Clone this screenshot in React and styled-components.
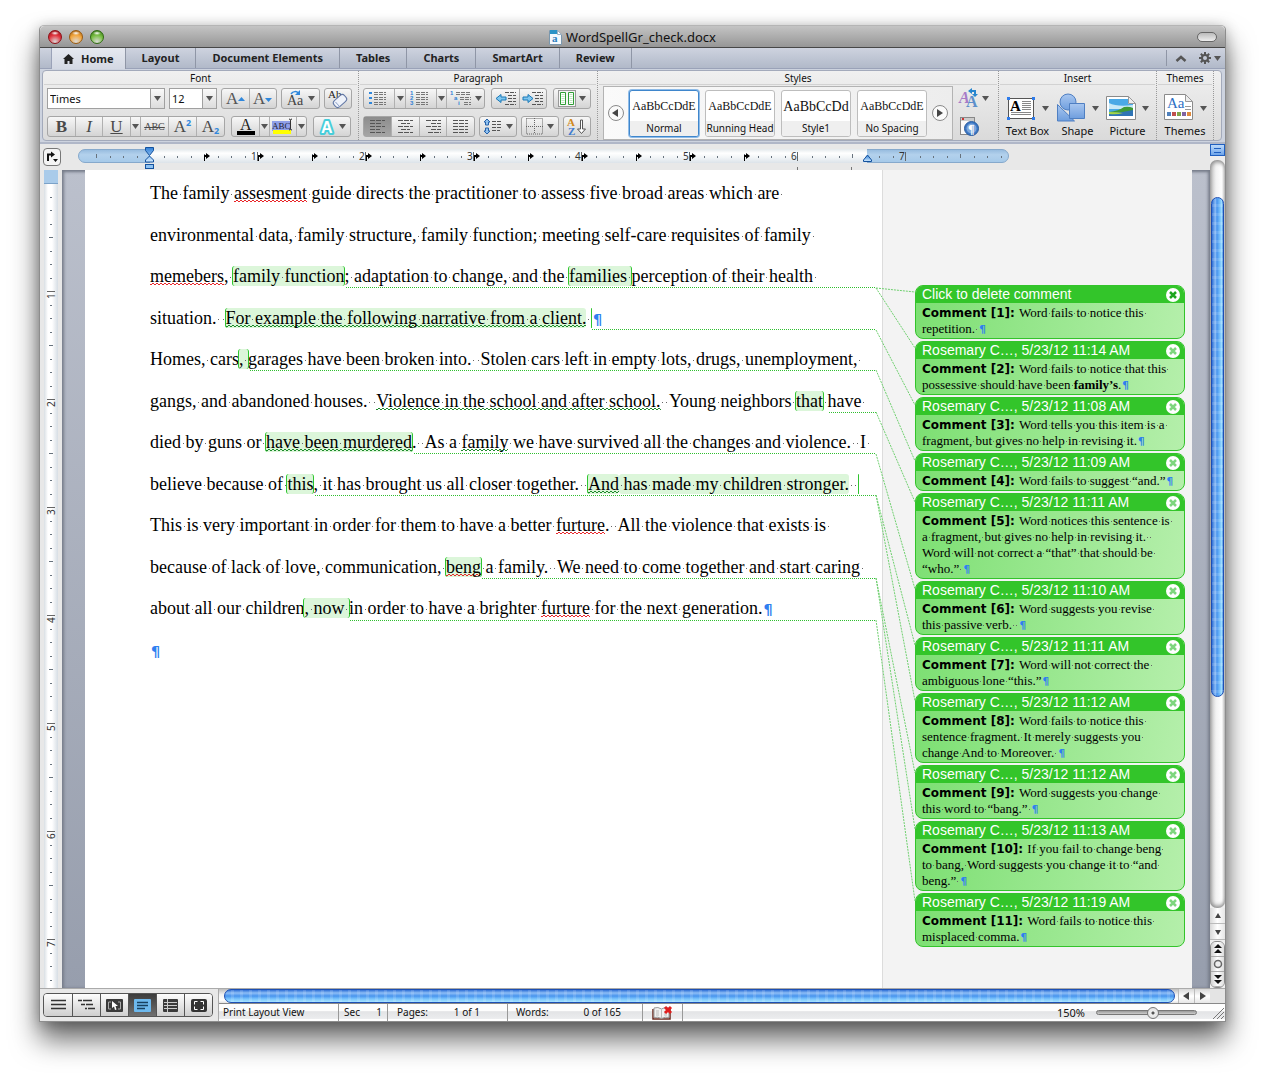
import { useState } from 'react'
import styled, { createGlobalStyle, css } from 'styled-components'

const UI = '"Noto Sans", "Open Sans", sans-serif'
const SERIF = '"Liberation Serif", "Times New Roman", serif'
const SANS = '"Liberation Sans", Arial, sans-serif'

const TABS = ['Home', 'Layout', 'Document Elements', 'Tables', 'Charts', 'SmartArt', 'Review']

const STYLE_CARDS = [
  { name: 'Normal', sample: 'AaBbCcDdE' },
  { name: 'Running Head', sample: 'AaBbCcDdE' },
  { name: 'Style1', sample: 'AaBbCcDd', large: true },
  { name: 'No Spacing', sample: 'AaBbCcDdE' },
]

// A run is plain text or { t, note, edge, under, strong, pilcrow, bracket }
const LINES = [
  ['The family ', { t: 'assesment', under: 'spell' }, ' guide directs the practitioner to assess five broad areas which are '],
  ['environmental data, family structure, family function; meeting self-care requisites of family '],
  [
    { t: 'memebers', under: 'spell' }, ', ', { t: 'family function', note: true, edge: 'both' },
    '; adaptation to change, and the ', { t: 'families ', note: true, edge: 'both' }, 'perception of their health ',
  ],
  ['situation.  ', { t: 'For example the following narrative from a client.', note: true, edge: 'left', under: 'grammar' }, ' ', { bracket: true }, { pilcrow: true }],
  ['Homes, cars', { t: ', ', note: true, edge: 'both' }, 'garages have been broken into.  Stolen cars left in empty lots, drugs, unemployment, '],
  ['gangs, and abandoned houses.  ', { t: 'Violence in the school and after school.', under: 'grammar' }, '  Young neighbors ', { t: 'that', note: true, edge: 'both' }, ' have '],
  ['died by guns or ', { t: 'have been murdered', note: true, edge: 'both', under: 'grammar' }, '.  As a ', { t: 'family', under: 'grammar' }, ' we have survived all the changes and violence.  I '],
  [
    'believe because of ', { t: 'this', note: true, edge: 'both' }, ', it has brought us all closer together.  ',
    { t: 'And', note: true, edge: 'left', under: 'grammar' }, { t: ' has made my children stronger.', note: true }, '  ', { bracket: true },
  ],
  ['This is very important in order for them to have a better ', { t: 'furture', under: 'spell' }, '.  All the violence that exists is '],
  ['because of lack of love, communication, ', { t: 'beng', note: true, edge: 'both', under: 'spell' }, ' a family.  We need to come together and start caring '],
  ['about all our children', { t: ', now ', note: true, edge: 'both' }, 'in order to have a brighter ', { t: 'furture', under: 'spell' }, ' for the next generation.', { pilcrow: true }],
  [{ pilcrow: true }],
]

const P = { pilcrow: true }

const COMMENTS = [
  { head: 'Click to delete comment', hot: true, lines: [['Word fails to notice this '], ['repetition. ', P]] },
  { head: 'Rosemary C…, 5/23/12 11:14 AM', lines: [['Word fails to notice that this '], ['possessive should have been ', { t: 'family’s', strong: true }, '.', P]] },
  { head: 'Rosemary C…, 5/23/12 11:08 AM', lines: [['Word tells you this item is a '], ['fragment, but gives no help in revising it.', P]] },
  { head: 'Rosemary C…, 5/23/12 11:09 AM', lines: [['Word fails to suggest “and.”', P]] },
  { head: 'Rosemary C…, 5/23/12 11:11 AM', lines: [['Word notices this sentence is '], ['a fragment, but gives no help in revising it.  '], ['Word will not correct a “that” that should be '], ['“who.” ', P]] },
  { head: 'Rosemary C…, 5/23/12 11:10 AM', lines: [['Word suggests you revise '], ['this passive verb.  ', P]] },
  { head: 'Rosemary C…, 5/23/12 11:11 AM', lines: [['Word will not correct the '], ['ambiguous lone “this.”', P]] },
  { head: 'Rosemary C…, 5/23/12 11:12 AM', lines: [['Word fails to notice this '], ['sentence fragment. It merely suggests you '], ['change And to Moreover. ', P]] },
  { head: 'Rosemary C…, 5/23/12 11:12 AM', lines: [['Word suggests you change '], ['this word to “bang.” ', P]] },
  { head: 'Rosemary C…, 5/23/12 11:13 AM', lines: [['If you fail to change beng '], ['to bang, Word suggests you change it to “and '], ['beng.” ', P]] },
  { head: 'Rosemary C…, 5/23/12 11:19 AM', lines: [['Word fails to notice this '], ['misplaced comma.', P]] },
]

// Horizontal leaders: where the note ends, and the line it sits under
const LEADERS = [[261, 117], [507, 159], [165, 200], [744, 242], [329, 283], [230, 325], [397, 408], [265, 450]]
// Diagonals: leader height to the comment's top
const DIAGONALS = [[118, 122], [118, 178], [160, 235], [200, 291], [242, 332], [284, 419], [325, 475], [325, 531], [408, 603], [408, 659], [450, 731]]

const range = n => Array.from({ length: n }, (_, i) => i)

export default function App() {
  const [tab, setTab] = useState('Home')
  const [style, setStyle] = useState('Normal')
  const [view, setView] = useState(3)
  const [align, setAlign] = useState(0)

  return (
    <>
      <Global />
      <S.Window>
        <S.TitleBar>
          <S.Lights>
            <S.Light $c="#e0323c" $d="#8e1017" aria-label="Close" />
            <S.Light $c="#f3a63c" $d="#9a5a10" aria-label="Minimize" />
            <S.Light $c="#76bd40" $d="#2f6b12" aria-label="Zoom" />
          </S.Lights>
          <S.Title>
            <DocIcon />
            WordSpellGr_check.docx
          </S.Title>
          <S.Pill aria-label="Toggle toolbar" />
        </S.TitleBar>

        <S.TabBar>
          {TABS.map(name => (
            <S.Tab key={name} $active={tab === name} onClick={() => setTab(name)}>
              {name === 'Home' && <HomeIcon />}
              {name}
            </S.Tab>
          ))}
          <S.TabTools>
            <S.Bare aria-label="Collapse ribbon">
              <svg width="12" height="7"><path d="M1.500 6L6 2l4.500 4" fill="none" stroke="#555" strokeWidth="2.500" /></svg>
            </S.Bare>
            <S.Bare aria-label="Ribbon settings"><GearIcon /><Caret /></S.Bare>
          </S.TabTools>
        </S.TabBar>

        <S.RibbonWrap>
          <S.Ribbon>
            <S.Group>
              <S.GroupName>Font</S.GroupName>
              <S.GroupBody>
                <S.Row $gap={4}>
                  <S.Combo $w={118}>
                    <input aria-label="Font name" defaultValue="Times" />
                    <button aria-label="Choose font"><Caret /></button>
                  </S.Combo>
                  <S.Combo $w={48}>
                    <input aria-label="Font size" defaultValue="12" />
                    <button aria-label="Choose size"><Caret /></button>
                  </S.Combo>
                  <S.Segment>
                    <S.Tool $w={27} aria-label="Grow font"><LetterArrow up /></S.Tool>
                    <S.Tool $w={27} aria-label="Shrink font"><LetterArrow /></S.Tool>
                  </S.Segment>
                  <S.Segment>
                    <S.Tool $w={37} aria-label="Change case"><CaseIcon /><Caret /></S.Tool>
                  </S.Segment>
                  <S.Segment>
                    <S.Tool $w={26} aria-label="Clear formatting"><EraserIcon /></S.Tool>
                  </S.Segment>
                </S.Row>
                <S.Row $gap={6}>
                  <S.Segment>
                    <S.Tool $w={27} $glyph><b>B</b></S.Tool>
                    <S.Tool $w={27} $glyph><i>I</i></S.Tool>
                    <S.Tool $w={28} $glyph><u>U</u></S.Tool>
                    <S.Tool $w={10} aria-label="Underline style"><Caret /></S.Tool>
                    <S.Tool $w={28} $glyph $small><s>ABC</s></S.Tool>
                    <S.Tool $w={28} $glyph>A<sup>2</sup></S.Tool>
                    <S.Tool $w={28} $glyph>A<sub>2</sub></S.Tool>
                  </S.Segment>
                  <S.Segment>
                    <S.Tool $w={27} aria-label="Font color"><ColorIcon /></S.Tool>
                    <S.Tool $w={10} aria-label="Pick font color"><Caret /></S.Tool>
                    <S.Tool $w={27} aria-label="Highlight"><HighlightIcon /></S.Tool>
                    <S.Tool $w={10} aria-label="Pick highlight"><Caret /></S.Tool>
                  </S.Segment>
                  <S.Segment>
                    <S.Tool $w={36} aria-label="Text effects"><GlowIcon /><Caret /></S.Tool>
                  </S.Segment>
                </S.Row>
              </S.GroupBody>
            </S.Group>

            <S.Group>
              <S.GroupName>Paragraph</S.GroupName>
              <S.GroupBody>
                <S.Row $gap={6}>
                  <S.Segment>
                    <S.Tool $w={30} aria-label="Bullets"><ListIcon kind="bullet" /></S.Tool>
                    <S.Tool $w={11} aria-label="Bullet style"><Caret /></S.Tool>
                    <S.Tool $w={31} aria-label="Numbering"><ListIcon kind="number" /></S.Tool>
                    <S.Tool $w={10} aria-label="Number style"><Caret /></S.Tool>
                    <S.Tool $w={38} aria-label="Multilevel list"><ListIcon kind="multi" /><Caret /></S.Tool>
                  </S.Segment>
                  <S.Segment>
                    <S.Tool $w={27} aria-label="Decrease indent"><IndentIcon left /></S.Tool>
                    <S.Tool $w={27} aria-label="Increase indent"><IndentIcon /></S.Tool>
                  </S.Segment>
                  <S.Segment>
                    <S.Tool $w={36} aria-label="Columns"><ColumnsIcon /><Caret /></S.Tool>
                  </S.Segment>
                </S.Row>
                <S.Row $gap={4}>
                  <S.Segment>
                    {['left', 'center', 'right', 'justify'].map((kind, i) => (
                      <S.Tool key={kind} $w={i % 2 ? 28 : 27} $pressed={align === i} onClick={() => setAlign(i)} aria-label={`Align ${kind}`}>
                        <AlignIcon kind={kind} />
                      </S.Tool>
                    ))}
                  </S.Segment>
                  <S.Segment>
                    <S.Tool $w={36} aria-label="Line spacing"><SpacingIcon /><Caret /></S.Tool>
                  </S.Segment>
                  <S.Segment>
                    <S.Tool $w={36} aria-label="Borders"><BordersIcon /><Caret /></S.Tool>
                  </S.Segment>
                  <S.Segment>
                    <S.Tool $w={26} aria-label="Sort"><SortIcon /></S.Tool>
                  </S.Segment>
                </S.Row>
              </S.GroupBody>
            </S.Group>

            <S.Group $grow>
              <S.GroupName>Styles</S.GroupName>
              <S.StylesBody>
                <S.Gallery>
                  <S.Round aria-label="Previous styles"><Triangle dir="left" /></S.Round>
                  <S.Cards>
                    {STYLE_CARDS.map(card => (
                      <S.Card key={card.name} $active={style === card.name} onClick={() => setStyle(card.name)}>
                        <S.Sample $large={card.large}>{card.sample}</S.Sample>
                        <S.CardName>{card.name}</S.CardName>
                      </S.Card>
                    ))}
                  </S.Cards>
                  <S.Round aria-label="More styles"><Triangle dir="right" /></S.Round>
                </S.Gallery>
                <S.StyleTools>
                  <S.Bare aria-label="Change styles"><ChangeStylesIcon /><Caret /></S.Bare>
                  <S.Bare aria-label="Styles toolbox"><ToolboxIcon /></S.Bare>
                </S.StyleTools>
              </S.StylesBody>
            </S.Group>

            <S.Group>
              <S.GroupName>Insert</S.GroupName>
              <S.BigRow>
                <S.Big $w={53}><span><TextBoxIcon /><Caret /></span>Text Box</S.Big>
                <S.Big $w={47}><span><ShapeIcon /><Caret /></span>Shape</S.Big>
                <S.Big $w={53}><span><PictureIcon /><Caret /></span>Picture</S.Big>
              </S.BigRow>
            </S.Group>

            <S.Group>
              <S.GroupName>Themes</S.GroupName>
              <S.BigRow>
                <S.Big $w={52}><span><ThemesIcon /><Caret /></span>Themes</S.Big>
              </S.BigRow>
            </S.Group>
            <S.RibbonEnd />
          </S.Ribbon>
        </S.RibbonWrap>

        <S.Work>
          <S.Main>
            <S.RulerRow>
              <S.TabStop aria-label="Tab stop">
                <svg width="14" height="14"><path d="M3 11V4.500h4" fill="none" stroke="#111" strokeWidth="2" /><path d="M6 1.500l4 3-4 3zM8 9h5l-2.500 3z" fill="#111" /></svg>
              </S.TabStop>
              <Ruler />
            </S.RulerRow>
            <S.Canvas>
              <S.SideRuler><VerticalRuler /></S.SideRuler>
              <S.Desk>
                <S.Page>
                  <S.Text>
                    {LINES.map((runs, i) => <S.Line key={i}><Runs runs={runs} /></S.Line>)}
                    <S.Leaders>
                      {LEADERS.map(([x, y]) => <line key={x} x1={x} x2="100%" y1={y + 0.5} y2={y + 0.5} stroke="#2fbf2f" strokeDasharray="1 1" />)}
                    </S.Leaders>
                  </S.Text>
                  <S.Margin>
                    <S.Diagonals width="39" height="740">
                      {DIAGONALS.map(([a, b]) => <line key={b} x1="0" y1={a} x2="39" y2={b} stroke="#6fd06f" strokeDasharray="2 1" />)}
                    </S.Diagonals>
                    {COMMENTS.map((comment, i) => <Comment key={i} number={i + 1} {...comment} />)}
                  </S.Margin>
                </S.Page>
              </S.Desk>
            </S.Canvas>
          </S.Main>
          <S.VScroll>
            <S.Split><i /><i /></S.Split>
            <S.VTrack><S.VThumb /></S.VTrack>
            <S.VArrow aria-label="Scroll up"><Triangle dir="up" /></S.VArrow>
            <S.VArrow aria-label="Scroll down"><Triangle dir="down" /></S.VArrow>
            <S.Browse>
              <button aria-label="Previous page"><svg width="10" height="10"><path d="M5 0l4 4H1zM5 5l4 4H1z" fill="#111" /></svg></button>
              <button aria-label="Select browse object"><svg width="10" height="10"><circle cx="5" cy="5" r="3.500" fill="#eee" stroke="#666" strokeWidth="1.500" /></svg></button>
              <button aria-label="Next page"><svg width="10" height="10"><path d="M5 5L1 1h8zM5 10L1 6h8z" fill="#111" /></svg></button>
            </S.Browse>
          </S.VScroll>
        </S.Work>

        <S.Footer>
          <S.Views>
            {range(6).map(i => (
              <S.View key={i} $active={view === i} onClick={() => setView(i)} aria-label={`View ${i + 1}`}><ViewIcon index={i} /></S.View>
            ))}
          </S.Views>
          <S.FooterMain>
            <S.HScroll>
              <S.HThumb />
              <S.HArrow aria-label="Scroll left"><Triangle dir="left" /></S.HArrow>
              <S.HArrow aria-label="Scroll right"><Triangle dir="right" /></S.HArrow>
              <S.Corner />
            </S.HScroll>
            <S.Status>
              <S.Cell $w={120} $l={4}>Print Layout View</S.Cell>
              <S.Cell $w={49}><span>Sec</span><span>1</span></S.Cell>
              <S.Cell $w={120} $l={9} $r={27}><span>Pages:</span><span>1 of 1</span></S.Cell>
              <S.Cell $w={135} $l={8} $r={21}><span>Words:</span><span>0 of 165</span></S.Cell>
              <S.Cell $w={40} $center><BookIcon /></S.Cell>
              <S.Zoom>
                <label htmlFor="zoom">150%</label>
                <input id="zoom" type="range" min="0" max="100" defaultValue="58" />
                <svg width="14" height="14"><path d="M2 13L13 2M6 13l7-7M10 13l3-3" stroke="#777" /></svg>
              </S.Zoom>
            </S.Status>
          </S.FooterMain>
        </S.Footer>
      </S.Window>
    </>
  )
}

function Words({ text }) {
  return text.split(/( )/).map((part, i) => part === ' ' ? <S.Space key={i}> </S.Space> : part)
}

function Runs({ runs }) {
  return runs.map((run, i) => {
    if (typeof run === 'string') return <Words key={i} text={run} />
    if (run.pilcrow) return <S.Pilcrow key={i}>¶</S.Pilcrow>
    if (run.bracket) return <S.Mark key={i} $note $edge="bracket" />
    if (run.strong) return <strong key={i}><Words text={run.t} /></strong>
    return (
      <S.Mark key={i} $note={run.note} $edge={run.edge}>
        {run.under ? <S.Squiggle $kind={run.under}><Words text={run.t} /></S.Squiggle> : <Words text={run.t} />}
      </S.Mark>
    )
  })
}

function Comment({ number, head, hot, lines }) {
  return (
    <S.Comment>
      <header>
        {head}
        <S.Close aria-label={`Delete comment ${number}`}>
          <svg width="14" height="14"><circle cx="7" cy="7" r="7" fill="#fff" /><path d="M4 4l6 6M10 4l-6 6" stroke={hot ? '#1fa51f' : '#7ed67e'} strokeWidth="2.500" /></svg>
        </S.Close>
      </header>
      <S.CommentBody>
        {lines.map((runs, i) => (
          <p key={i}>
            {i === 0 && <S.Label>Comment [{number}]: </S.Label>}
            <Runs runs={runs} />
          </p>
        ))}
      </S.CommentBody>
    </S.Comment>
  )
}

function Ruler() {
  const inch = 108
  return (
    <svg width="931" height="26">
      <defs>
        <linearGradient id="sheet" x2="0" y2="1"><stop stopColor="#e3e8ec" /><stop offset=".3" stopColor="#fff" /><stop offset=".6" stopColor="#f2f5f7" /><stop offset="1" stopColor="#dce3e9" /></linearGradient>
        <linearGradient id="pool" x2="0" y2="1"><stop stopColor="#95bade" /><stop offset=".4" stopColor="#b3d1ec" /><stop offset="1" stopColor="#a5c9e9" /></linearGradient>
        <linearGradient id="knob" x2="0" y2="1"><stop stopColor="#2f7fd8" /><stop offset="1" stopColor="#d4ecff" /></linearGradient>
      </defs>
      <rect x=".5" y="5.500" width="930" height="13" rx="6.500" fill="url(#pool)" stroke="#86a9cc" />
      <rect x="72" y="5" width="717" height="14" fill="url(#sheet)" />
      {range(68).map(i => {
        const x = Math.round(72 + (i - 4) * inch / 8)
        const k = (i - 4) % 8
        if (k === 0 || x < 10 || x > 925) return null
        return <rect key={i} x={x} y={k % 4 ? 12 : 10} width="1" height={k % 4 ? 2 : 4} fill="#67727d" />
      })}
      {range(7).map(i => (
        <g key={i}>
          <text x={72 + (i + 1) * inch - 7} y="16" fontFamily={UI} fontSize="10" fill="#333">{i + 1}</text>
          <rect x={72 + (i + 1) * inch - 1} y="8" width="1" height="9" fill="#666" />
        </g>
      ))}
      {range(11).map(i => (
        <path key={i} d={`M${54 * i + 126} 17v-6h2v-2l4 3-4 3v-2h-1v4z`} fill="#000" />
      ))}
      <path d="M719.500 23v3M773.500 23v3" stroke="#777" />
      <path d="M67.500 3.500h8v3l-4 5-4-5zM71.500 12l4 4v2h-8v-2z" fill="url(#knob)" stroke="#14529e" />
      <rect x="67.500" y="20.500" width="8" height="4" fill="#8ec2f2" stroke="#14529e" />
      <path d="M785.500 16l4-5 4 5v1.500h-8z" fill="url(#knob)" stroke="#14529e" />
    </svg>
  )
}

function VerticalRuler() {
  const inch = 108
  return (
    <svg width="14" height="818">
      <rect width="14" height="14" fill="#a9cbea" />
      <rect y="13" width="14" height="1" fill="#7ba2c8" />
      {range(60).map(i => {
        if (i % 8 === 7) return null
        const y = Math.round(13 + (i + 1) * inch / 8)
        return <rect key={i} x={i % 8 === 3 ? 5 : 6} y={y} width={i % 8 === 3 ? 4 : 2} height="1" fill="#67727d" />
      })}
      {range(7).map(i => (
        <g key={i}>
          <rect x="3" y={13 + (i + 1) * inch} width="8" height="1" fill="#666" />
          <text transform={`translate(11 ${13 + (i + 1) * inch + 8}) rotate(-90)`} fontFamily={UI} fontSize="10" fill="#333">{i + 1}</text>
        </g>
      ))}
    </svg>
  )
}

const Caret = () => <svg width="7" height="5"><path d="M0 0h7l-3.500 5z" fill="#555" /></svg>

const TRIANGLES = { left: 'M6 0v8L0 4z', right: 'M1 0v8l6-4z', up: 'M4 1l3 5H1z', down: 'M4 7L1 2h6z' }
const Triangle = ({ dir }) => <svg width="8" height="8"><path d={TRIANGLES[dir]} fill="#444" /></svg>

const HomeIcon = () => (
  <svg width="11" height="10"><path d="M5.500 0L11 5H9.500v5h-3V7h-2v3h-3V5H0z" fill="#222" /></svg>
)

const GearIcon = () => (
  <svg width="12" height="12">
    <g stroke="#555" strokeWidth="2"><path d="M6 0v12M0 6h12M1.800 1.800l8.400 8.400M10.200 1.800l-8.400 8.400" /></g>
    <circle cx="6" cy="6" r="4" fill="#555" /><circle cx="6" cy="6" r="2" fill="#c3c9d6" />
  </svg>
)

const DocIcon = () => (
  <svg width="13" height="16">
    <path d="M.5 1.500h8l4 4v10H.5z" fill="#f4f9fd" stroke="#7a97ad" />
    <path d="M1 1h8l-1 4H1z" fill="#2c93c6" /><path d="M8.500 1.500v4h4z" fill="#fff" stroke="#9cb0c0" />
    <text x="3" y="13" fontFamily={SERIF} fontSize="11" fontWeight="700" fill="#2d7fbd">a</text>
  </svg>
)

const LetterArrow = ({ up }) => (
  <svg width="20" height="18">
    <text x="0" y="14" fontFamily={SERIF} fontSize="17" fill="#555">A</text>
    <path d={up ? 'M12 11l3.500-4 3.500 4z' : 'M12 8h7l-3.500 4z'} fill="#2f87dc" />
  </svg>
)

const CaseIcon = () => (
  <svg width="19" height="18">
    <text x="1" y="15" fontFamily={SERIF} fontSize="14" fill="#444">Aa</text>
    <path d="M5 4c2-3 6-3 7-1" fill="none" stroke="#2f87dc" strokeWidth="1.500" /><path d="M9 5h5V0z" fill="#2f87dc" />
  </svg>
)

const EraserIcon = () => (
  <svg width="22" height="19">
    <text x="1" y="9" fontFamily={SERIF} fontSize="11" fill="#222">Ab</text>
    <rect x="6" y="8" width="14" height="8" rx="3" transform="rotate(-42 13 12)" fill="#eef2fa" stroke="#6278a5" />
    <path d="M8.500 13l4 4.500" stroke="#8ba0c8" />
  </svg>
)

const ColorIcon = () => (
  <svg width="20" height="17"><text x="4" y="12" fontFamily={SERIF} fontSize="16" fill="#222">A</text><rect x="1" y="13" width="18" height="4" /></svg>
)

const HighlightIcon = () => (
  <svg width="22" height="17">
    <rect x="0" y="3" width="19" height="10" fill="#8f9fe8" />
    <text x="0" y="11" fontFamily={SERIF} fontSize="9" fill="#223">ABC</text>
    <rect x="1" y="12" width="18" height="4" fill="#ff0" />
    <path d="M17 1q1.500 0 1.500 1.500v8q0 1.500-1.500 1.500M20 1q-1.500 0-1.500 1.500v8q0 1.500 1.500 1.500" fill="none" stroke="#333" />
  </svg>
)

const GlowIcon = () => (
  <svg width="17" height="18">
    <text x="2" y="15" fontFamily={SANS} fontWeight="700" fontSize="16" fill="#fff" stroke="#46cedb" strokeWidth="4" strokeLinejoin="round" paintOrder="stroke">A</text>
  </svg>
)

const LIST_MARKS = { bullet: [], number: ['1', '2', '3'], multi: ['1', 'a', 'i'] }
const ListIcon = ({ kind }) => {
  const step = kind === 'multi' ? 4 : 0
  return (
    <svg width="22" height="17">
      {kind === 'bullet' && <path d="M1 2h3v2H1zM1 7h3v2H1zM1 12h3v2H1z" fill="#2f87dc" />}
      {LIST_MARKS[kind].map((t, i) => (
        <text key={i} x={i * step} y={5 + i * 5} fontFamily={SANS} fontSize="6" fontWeight="700" fill="#2f7fd4">{t}</text>
      ))}
      {range(3).map(i => (
        <path key={i} d={`M${6 + i * step} ${2.5 + i * 5}H${step ? 21 : 18}M${6 + i * step} ${4.5 + i * 5}H${step ? 21 : 18}`} stroke="#777" strokeDasharray="4 1" />
      ))}
    </svg>
  )
}

const IndentIcon = ({ left }) => (
  <svg width="22" height="16">
    <path d="M10 1.500h11M13 4.500h8M13 7.500h8M13 10.500h8M10 13.500h11" stroke="#555" strokeDasharray="4 1" />
    <path d={left ? 'M1 7.500l5-4v2.500h5v3H6v2.500z' : 'M11 7.500l-5-4v2.500H1v3h5v2.500z'} fill="#7fc6ef" stroke="#1978b8" />
  </svg>
)

const ColumnsIcon = () => (
  <svg width="18" height="17">
    <rect x=".5" y=".5" width="17" height="16" fill="#f6f6f6" stroke="#999" />
    <path d="M2.500 2.500h5v12h-5zM10.500 2.500h5v12h-5z" fill="#fff" stroke="#2f9e35" />
    <path d="M5 4v9M13 4v9" stroke="#bfe6bf" strokeWidth="3" strokeDasharray="1 1" />
  </svg>
)

const ALIGN = {
  left: [[1, 16], [1, 12], [1, 16], [1, 11], [1, 16]],
  center: [[1, 16], [4, 13], [1, 16], [4, 13], [1, 16]],
  right: [[1, 16], [6, 16], [1, 16], [6, 16], [3, 16]],
  justify: [[1, 16], [1, 16], [1, 16], [1, 16], [1, 16]],
}
const AlignIcon = ({ kind }) => (
  <svg width="17" height="15">
    {ALIGN[kind].map(([a, b], i) => <path key={i} d={`M${a} ${i * 3 + 1.5}H${b}`} stroke="#555" strokeDasharray="5 1" />)}
  </svg>
)

const SpacingIcon = () => (
  <svg width="20" height="17">
    <path d="M4 1l3 3H5.500v3h-3V4H1zM4 16l3-3H5.500v-3h-3v3H1z" fill="#8fc0ee" stroke="#2462ab" />
    <path d="M9 3.500h10M9 6.500h9M9 9.500h10M9 12.500h8" stroke="#555" strokeDasharray="4 1" />
  </svg>
)

const BordersIcon = () => (
  <svg width="18" height="17"><path d="M.5.500h16v15.500H.5zM8.500 0v16M0 8.500h17" fill="none" stroke="#666" strokeDasharray="1 1" /></svg>
)

const SortIcon = () => (
  <svg width="21" height="19">
    <text x="0" y="9" fontFamily={SERIF} fontSize="11" fontWeight="700" fill="#d08a1c">A</text>
    <text x="1" y="18" fontFamily={SERIF} fontSize="11" fontWeight="700" fill="#3f7cd0">Z</text>
    <path d="M13.500 3h2v9h3l-4 4.500-4-4.500h3z" fill="#fff" stroke="#555" />
  </svg>
)

const ChangeStylesIcon = () => (
  <svg width="20" height="20">
    <text x="0" y="15" fontFamily={SERIF} fontSize="16" fontStyle="italic" fontWeight="700" fill="#a77bc8">A</text>
    <text x="7" y="19" fontFamily={SERIF} fontSize="16" fontWeight="700" fill="#5d8fcb">A</text>
    <path d="M12 3h4v3" fill="none" stroke="#2786cf" strokeWidth="2" /><path d="M13 0v6l-4-3zM13 6h6l-3 3z" fill="#2786cf" />
  </svg>
)

const ToolboxIcon = () => (
  <svg width="20" height="20">
    <rect x="1.500" y="1.500" width="14" height="17" fill="#fafafa" stroke="#888" /><path d="M2 2h13v3H2z" fill="#ccc" /><path d="M3 2h2v2H3z" fill="#c33" />
    <circle cx="12.500" cy="12.500" r="7" fill="#3b78c6" stroke="#2a5b9e" /><circle cx="12.500" cy="12.500" r="5" fill="#fff" opacity=".35" />
    <text x="9" y="17" fontFamily={SERIF} fontSize="12" fontWeight="700" fill="#fff">¶</text>
  </svg>
)

const TextBoxIcon = () => (
  <svg width="30" height="26">
    <rect x="2.500" y="3.500" width="25" height="20" fill="#fff" stroke="#555" />
    <text x="4" y="16" fontFamily={SERIF} fontSize="15" fontWeight="700">A</text>
    <path d="M16 6.500h9M16 8.500h9M16 10.500h9M16 12.500h9M16 14.500h9M5 17.500h20M5 19.500h20" stroke="#888" />
    <path d="M1 2h3v3H1zM26 2h3v3h-3zM1 22h3v3H1zM26 22h3v3h-3z" fill="#2e7bea" />
  </svg>
)

const ShapeIcon = () => (
  <svg width="30" height="30">
    <defs><linearGradient id="shape" x2="0" y2="1"><stop stopColor="#a9c7f0" /><stop offset="1" stopColor="#6f9ede" /></linearGradient></defs>
    <g fill="url(#shape)" stroke="#4f7fc2">
      <circle cx="12" cy="9" r="8" /><path d="M1.500 11.500l17 16.500h-17z" /><path d="M13.500 10.500h15v15h-15z" />
    </g>
  </svg>
)

const PictureIcon = () => (
  <svg width="30" height="26">
    <path d="M.5 1.500h22l7 7v16H.5z" fill="#fff" stroke="#8a8a8a" />
    <path d="M3 4h19v5h5v12H3z" fill="#4aa9e6" /><path d="M3 8q8 4 24 2v4H3z" fill="#c9e9f7" />
    <path d="M3 17q10-1 15-5 5-1 9 1v5q-12 1-24 1z" fill="#3f9a35" /><path d="M3 18q12 0 24-3v6H3z" fill="#2f74b5" /><path d="M3 17q8 0 14 1-6 2-14 1z" fill="#a4d648" />
    <path d="M22.500 1.500v7h7z" fill="#eee" stroke="#999" />
  </svg>
)

const ThemesIcon = () => (
  <svg width="30" height="28">
    <path d="M.5.500h21l7 7v18H.5z" fill="#fff" stroke="#8a8a8a" /><path d="M21.500.500v7h7z" fill="#eee" stroke="#999" />
    <text x="3" y="14" fontFamily={SERIF} fontSize="15" fill="#2f6fc4">Aa</text>
    <path d="M21 12.500h6M21 15.500h6" stroke="#999" />
    {['#4f81bd', '#c0504d', '#7fa548', '#8064a2', '#e08a3c'].map((c, i) => <rect key={c} x={3 + i * 5} y="18" width="4" height="4" fill={c} />)}
  </svg>
)

const BookIcon = () => (
  <svg width="21" height="14">
    <path d="M1 3v10h17V3" fill="#fff" stroke="#6b2a1f" strokeWidth="1.500" />
    <path d="M2 2q4-1.500 7.500 1Q13 .5 17 2v9.500q-4-1-7.500 1-3.500-2-7.500-1z" fill="#f1f1f1" stroke="#999" />
    <path d="M9.500 3v9M4 5h3M4 7h3M4 9h3M12 7h3M12 9h3" stroke="#bbb" />
    <path d="M13 1l6 6M19 1l-6 6" stroke="#e01f1f" strokeWidth="3" />
  </svg>
)

function ViewIcon({ index }) {
  if (index === 0) return <svg width="15" height="12"><path d="M0 1.500h15M0 5.500h15M0 9.500h15" stroke="#333" strokeWidth="1.500" /></svg>
  if (index === 1) return <svg width="17" height="12"><path d="M0 1.500h4m1 0h9M3 5.500h4m1 0h7M7 9.500h2m1 0h7" stroke="#333" strokeWidth="1.500" /></svg>
  if (index === 2) {
    return (
      <svg width="17" height="13"><rect width="17" height="13" rx="1" fill="#3a3a3a" /><path d="M5 3H2.500v7H5M12 3h2.500v7H12" fill="none" stroke="#aaa" /><path d="M6 2l6 5H9.500l1 3.500-1.500.5-1-3.500L6 9z" fill="#fff" /></svg>
    )
  }
  if (index === 3) return <svg width="17" height="13"><rect width="17" height="13" rx="1" fill="#6db9ee" /><path d="M3 3.500h11M3 6.500h11M3 9.500h8" stroke="#17405f" strokeWidth="1.500" /></svg>
  if (index === 4) return <svg width="15" height="13"><rect width="15" height="13" rx="1" fill="#3a3a3a" /><path d="M4.500 0v13M1 3.500h13M1 6.500h13M1 9.500h13" stroke="#ccc" /></svg>
  return <svg width="16" height="13"><rect width="16" height="13" rx="2" fill="#333" /><path d="M3.500 5.500v-3h3M9.500 2.500h3v3M12.500 7.500v3h-3M6.500 10.500h-3v-3" fill="none" stroke="#fff" /></svg>
}

const Global = createGlobalStyle`
  * { box-sizing: border-box; }
  body { margin: 0; background: #fff; }
  #root { overflow: hidden; }
  button, input { font: inherit; color: inherit; margin: 0; padding: 0; }
  button { border: 0; background: none; }
  svg { display: block; flex: none; overflow: visible; }
`

const flexCenter = css`
  display: flex;
  align-items: center;
  justify-content: center;
`

const S = {
  Window: styled.div`
    display: flex;
    flex-direction: column;
    min-height: calc(100vh - 80px);
    margin: 25px 39px 55px;
    border: 1px solid #8d8d8d;
    border-top-color: #b5b5b5;
    border-radius: 5px 5px 0 0;
    background: #e8e8e8;
    box-shadow: 0 18px 28px rgba(0, 0, 0, 0.58), 0 2px 14px rgba(0, 0, 0, 0.25);
    font: 11px/14px ${UI};
    color: #111;
  `,

  TitleBar: styled.div`
    position: relative;
    ${flexCenter}
    height: 22px;
    background: linear-gradient(#c4c4c4, #969696);
    border-bottom: 1px solid #474747;
    border-radius: 5px 5px 0 0;
  `,

  Lights: styled.div`
    position: absolute;
    left: 8px;
    display: flex;
    gap: 7px;
  `,

  Light: styled.button`
    width: 14px;
    height: 14px;
    border-radius: 50%;
    border: 1px solid ${p => p.$d};
    background: radial-gradient(ellipse 4px 2px at 50% 18%, #fff, transparent), radial-gradient(circle at 50% 90%, #fff9 0, ${p => p.$c} 55%, ${p => p.$d} 100%);
  `,

  Title: styled.div`
    display: flex;
    align-items: center;
    gap: 4px;
    font-size: 13px;
  `,

  Pill: styled.button`
    position: absolute;
    right: 8px;
    width: 20px;
    height: 10px;
    border: 1px solid #666;
    border-radius: 5px;
    background: linear-gradient(#bbb, #eee);
  `,

  TabBar: styled.nav`
    display: flex;
    height: 21px;
    padding-left: 11px;
    background: linear-gradient(#ced3df, #b1b9c9);
    border-bottom: 1px solid #9aa2b8;
  `,

  Tab: styled.button`
    display: flex;
    align-items: center;
    gap: 7px;
    padding: 0 16px;
    border-right: 1px solid #8f96a6;
    font-weight: 700;
    color: #222;
    ${p => p.$active && css`
      margin-bottom: -1px;
      padding: 0 11px;
      border-left: 1px solid #9aa2b8;
      background: linear-gradient(#e6e9f0, #d3d8e3);
    `}
  `,

  TabTools: styled.div`
    display: flex;
    align-items: center;
    gap: 12px;
    margin: 2px 4px 2px auto;
    padding-left: 8px;
    border-left: 1px solid #8f96a6;
  `,

  Bare: styled.button`
    display: flex;
    align-items: center;
    gap: 3px;
  `,

  RibbonWrap: styled.div`
    padding: 1px 3px 1px 2px;
    background: #cdd3df;
    border-bottom: 2px solid #b0b7c8;
  `,

  Ribbon: styled.div`
    display: flex;
    height: 71px;
    border: 1px solid #a3aabb;
    border-radius: 4px;
    background: linear-gradient(#f0f0f0, #dadada);
  `,

  Group: styled.section`
    flex: ${p => p.$grow ? '1' : 'none'};
    border-right: 1px dotted #999;
    padding: 0 1px;
  `,

  GroupName: styled.h2`
    margin: 0;
    height: 14px;
    border-bottom: 1px solid #d2d2d2;
    font-size: 10px;
    font-weight: 400;
    line-height: 14px;
    text-align: center;
  `,

  GroupBody: styled.div`
    display: flex;
    flex-direction: column;
    gap: 7px;
    padding: 3px 5px 0 3px;
  `,

  Row: styled.div`
    display: flex;
    gap: ${p => p.$gap}px;
  `,

  Combo: styled.div`
    display: flex;
    width: ${p => p.$w}px;
    height: 21px;
    border: 1px solid #a0a0a0;
    background: #fff;

    input {
      flex: 1;
      min-width: 0;
      border: 0;
      padding-left: 2px;
      background: none;
    }

    button {
      ${flexCenter}
      width: 14px;
      border-left: 1px solid #a0a0a0;
      background: linear-gradient(#fafafa, #dcdcdc);
    }
  `,

  Segment: styled.div`
    display: flex;
    height: 21px;
    border: 1px solid #a6a6a6;
    border-radius: 3px;
    background: linear-gradient(#f7f7f7, #d4d4d4);
  `,

  Tool: styled.button`
    ${flexCenter}
    gap: 3px;
    width: ${p => p.$w}px;
    font-family: ${p => p.$glyph ? SERIF : UI};
    font-size: ${p => p.$small ? 10 : 17}px;
    color: #4a4a4a;
    background: ${p => p.$pressed ? 'linear-gradient(#8d8d8d, #a5a5a5)' : 'none'};

    & + & {
      border-left: 1px solid #b0b0b0;
    }

    ${p => p.$glyph && css`gap: 0;`}

    sup, sub {
      font: 700 9px/10px ${UI};
      color: #2f87dc;
    }
    sup { margin-bottom: 7px; }
    sub { margin-top: 8px; }
  `,

  StylesBody: styled.div`
    display: flex;
    gap: 6px;
    padding: 1px 6px 0 4px;
  `,

  Gallery: styled.div`
    flex: 1;
    display: flex;
    align-items: center;
    justify-content: space-between;
    height: 54px;
    padding: 0 4px;
    border: 1px solid #b3b3b3;
    background: linear-gradient(90deg, #fafafa, #ededed);
  `,

  Round: styled.button`
    ${flexCenter}
    width: 16px;
    height: 16px;
    border: 1px solid #8a8a8a;
    border-radius: 50%;
    background: #fafafa;
  `,

  Cards: styled.div`
    display: flex;
    gap: 6px;
  `,

  Card: styled.button`
    display: flex;
    flex-direction: column;
    width: 70px;
    height: 47px;
    border: 1px solid #bdbdbd;
    border-radius: 3px;
    background: #fff;
    overflow: hidden;
    ${p => p.$active && css`
      border-color: #3f86cc;
      box-shadow: 0 0 0 1px #8fbce8;
    `}
  `,

  Sample: styled.span`
    height: 30px;
    width: 100%;
    font: ${p => p.$large ? 14 : 12}px/31px ${SERIF};
    text-align: center;
  `,

  CardName: styled.span`
    flex: 1;
    width: 100%;
    font-size: 10px;
    line-height: 15px;
    text-align: center;
    background: #efefef;
  `,

  StyleTools: styled.div`
    display: flex;
    flex-direction: column;
    gap: 8px;
    padding-top: 2px;
    width: 32px;
  `,

  BigRow: styled.div`
    display: flex;
    padding: 8px 1px 0;
  `,

  Big: styled.button`
    display: flex;
    flex-direction: column;
    align-items: center;
    width: ${p => p.$w}px;
    font-size: 11px;
    line-height: 14px;

    span {
      display: flex;
      align-items: center;
      gap: 6px;
      height: 30px;
      margin-bottom: 1px;
    }
  `,

  RibbonEnd: styled.div`
    width: 7px;
  `,

  Work: styled.div`
    flex: 1;
    display: flex;
    min-height: 0;
  `,

  Main: styled.div`
    flex: 1;
    min-width: 0;
    display: flex;
    flex-direction: column;
  `,

  RulerRow: styled.div`
    display: flex;
    align-items: center;
    gap: 17px;
    height: 26px;
    padding-left: 3px;
    background: #e8e8e8;
    overflow: hidden;
  `,

  TabStop: styled.button`
    ${flexCenter}
    width: 18px;
    height: 18px;
    border: 1px solid #777;
    border-radius: 4px;
    background: #f4f4f4;
    flex: none;
  `,

  Canvas: styled.div`
    flex: 1;
    display: flex;
  `,

  SideRuler: styled.div`
    width: 22px;
    padding-left: 4px;
    background: linear-gradient(90deg, #e8e8e8 4px, #d9dfe4 4px, #fff 8px, #fff 12px, #d6dde4 18px, #e8e8e8 18px);
    overflow: hidden;
  `,

  Desk: styled.div`
    flex: 1;
    display: flex;
    padding: 0 18px 0 23px;
    background: linear-gradient(#bbc0cc, #979ead);
    box-shadow: inset 2px 2px 3px #777d8a, inset -2px 0 3px #777d8a;
  `,

  Page: styled.main`
    flex: 1;
    display: flex;
    background: #fff;
  `,

  Text: styled.article`
    position: relative;
    flex: 1;
    padding: 2px 0 0 65px;
    font: 18px/42px ${SERIF};
    color: #000;
  `,

  Line: styled.div`
    height: 42px;
    line-height: 42px;
    white-space: pre;

    &:nth-child(even) {
      height: 41px;
    }
  `,

  Space: styled.span`
    background: linear-gradient(#666, #666) 50% 60% / 1px 1px no-repeat;
  `,

  Mark: styled.span`
    ${p => p.$note && css`
      background: ${p.$edge === 'bracket' ? 'none' : '#dcf6da'};
      border: 0 solid #2fc52f;
      border-radius: 3px;
      margin: 0 ${p.$edge === 'both' ? -1 : 0}px 0 ${p.$edge === 'both' || p.$edge === 'left' ? -1 : 0}px;
      border-left-width: ${p.$edge === 'both' || p.$edge === 'left' ? 1 : 0}px;
      border-right-width: ${p.$edge === 'both' || p.$edge === 'bracket' ? 1 : 0}px;
    `}
  `,

  Squiggle: styled.span`
    --ink: ${p => p.$kind === 'spell' ? '#e8262a' : '#1d8a2a'};
    background:
      linear-gradient(90deg, var(--ink) 50%, transparent 50%) 0 calc(100% - 1px) / 4px 1px repeat-x,
      linear-gradient(90deg, transparent 50%, var(--ink) 50%) 0 calc(100% - 2px) / 4px 1px repeat-x;
  `,

  Pilcrow: styled.span`
    margin-left: 1px;
    color: #2f7ff0;
    font-family: "DejaVu Sans", sans-serif;
    font-weight: 700;
    font-size: 0.8em;
    line-height: 1;
  `,

  Leaders: styled.svg`
    position: absolute;
    top: 0;
    left: 0;
    width: calc(100% - 6px);
    height: 100%;
    pointer-events: none;
  `,

  Margin: styled.aside`
    position: relative;
    display: flex;
    flex-direction: column;
    gap: 2px;
    width: 310px;
    padding: 115px 7px 40px 32px;
    border-left: 1px solid #dcdcdc;
    background: #f3f3f3;
  `,

  Diagonals: styled.svg`
    position: absolute;
    top: 0;
    left: -7px;
    pointer-events: none;
  `,

  Comment: styled.section`
    border-radius: 8px;
    overflow: hidden;
    border: 1px solid #33c32b;
    background: linear-gradient(100deg, #7cdf72, #b5efab);

    header {
      display: flex;
      align-items: center;
      justify-content: space-between;
      height: 17px;
      padding: 0 4px 0 6px;
      background: #33c52a;
      color: #fff;
      font: 14px/17px ${SANS};
    }
  `,

  Close: styled.button`
    display: flex;
  `,

  CommentBody: styled.div`
    padding: 2px 0 1px 6px;

    p {
      height: 16px;
      margin: 0;
      font: 13px/16px ${SERIF};
      color: #000;
      white-space: pre;
    }
  `,

  Label: styled.b`
    font: 700 12px/16px "DejaVu Sans", sans-serif;
  `,

  VScroll: styled.div`
    display: flex;
    flex-direction: column;
    width: 15px;
    background: #eee;
  `,

  Split: styled.div`
    display: flex;
    flex-direction: column;
    gap: 3px;
    height: 12px;
    margin-bottom: 4px;
    padding: 3px 3px;
    border: 1px solid #1f5fc0;
    background: linear-gradient(#bcd9fa, #6ea5ea);

    i {
      flex: none;
      height: 1px;
      background: #1f5fc0;
    }
  `,

  VTrack: styled.div`
    flex: 1;
    padding-top: 37px;
    border-radius: 7px;
    background: linear-gradient(90deg, #bdbdbd, #f2f2f2 40%, #fff 80%, #e2e2e2);
    box-shadow: inset 0 3px 4px -1px #888, inset 0 -3px 4px -1px #888;
  `,

  VThumb: styled.div`
    height: 500px;
    margin: 0 1px;
    border: 1px solid #1c4fb4;
    border-radius: 7px;
    background:
      repeating-linear-gradient(transparent 0 6px, #fff2 6px 9px),
      linear-gradient(90deg, #2e6fd6, #8cbdf6 30%, #4894ee 45%, #7cc6fd 75%, #a5e2ff 90%, #3c7ddc);
  `,

  VArrow: styled.button`
    ${flexCenter}
    height: 16px;
    border-bottom: 1px solid #bbb;
    background: linear-gradient(90deg, #d8d8d8, #fff 50%, #e6e6e6);
  `,

  Browse: styled.div`
    margin-top: 1px;
    border: 1px solid #8a8a8a;
    border-radius: 6px;
    overflow: hidden;

    button {
      ${flexCenter}
      width: 100%;
      height: 15px;
      background: linear-gradient(90deg, #d0d0d0, #fff 50%, #ddd);
      border-bottom: 1px solid #aaa;
    }
  `,

  Footer: styled.footer`
    display: flex;
    height: 33px;
    border-top: 1px solid #aaa;
  `,

  Views: styled.div`
    display: flex;
    margin: 4px 5px 4px 3px;
    border: 1px solid #555;
    border-radius: 4px;
    overflow: hidden;
  `,

  View: styled.button`
    ${flexCenter}
    width: 28px;
    background: ${p => p.$active ? 'linear-gradient(#3c3c3c, #707070)' : 'linear-gradient(#fdfdfd, #cfcfcf)'};

    & + & {
      border-left: 1px solid #555;
    }
  `,

  FooterMain: styled.div`
    flex: 1;
    border-left: 1px solid #aaa;
  `,

  HScroll: styled.div`
    display: flex;
    height: 15px;
    padding-left: 5px;
    background: linear-gradient(#bdbdbd, #f2f2f2 40%, #fff 80%, #e2e2e2);
    border-bottom: 1px solid #888;
  `,

  HThumb: styled.div`
    flex: 1;
    margin-right: 3px;
    border: 1px solid #1c4fb4;
    border-radius: 7px;
    background:
      repeating-linear-gradient(90deg, transparent 0 6px, #fff2 6px 9px),
      linear-gradient(#2e6fd6, #8cbdf6 25%, #4894ee 50%, #7cc6fd 75%, #a5e2ff);
  `,

  HArrow: styled.button`
    ${flexCenter}
    width: 16px;
    border-left: 1px solid #bbb;
    background: linear-gradient(#d8d8d8, #fff 50%, #e6e6e6);
  `,

  Corner: styled.div`
    width: 15px;
    background: #e4e4e4;
  `,

  Status: styled.div`
    display: flex;
    height: 17px;
    font-size: 10px;
    line-height: 17px;
    background: linear-gradient(#fdfdfd 40%, #e3e4e6 45%, #ebecee 85%, #fff 90%);
  `,

  Cell: styled.div`
    display: flex;
    align-items: center;
    justify-content: ${p => p.$center ? 'center' : 'space-between'};
    width: ${p => p.$w}px;
    padding: 0 ${p => p.$r || 5}px 0 ${p => p.$l || 5}px;
    border-right: 1px solid #999;
  `,

  Zoom: styled.div`
    flex: 1;
    display: flex;
    align-items: center;
    justify-content: flex-end;

    label {
      margin-right: 11px;
      font-size: 11px;
    }

    svg { margin-left: 14px; }

    input {
      appearance: none;
      width: 101px;
      height: 5px;
      border: 1px solid #777;
      border-radius: 3px;
      background: linear-gradient(#999, #ccc);
    }

    input::-webkit-slider-thumb {
      appearance: none;
      width: 12px;
      height: 12px;
      border: 1px solid #777;
      border-radius: 50%;
      background: radial-gradient(circle, #555 0 1px, #eee 2px, #ddd);
    }
  `,
}
